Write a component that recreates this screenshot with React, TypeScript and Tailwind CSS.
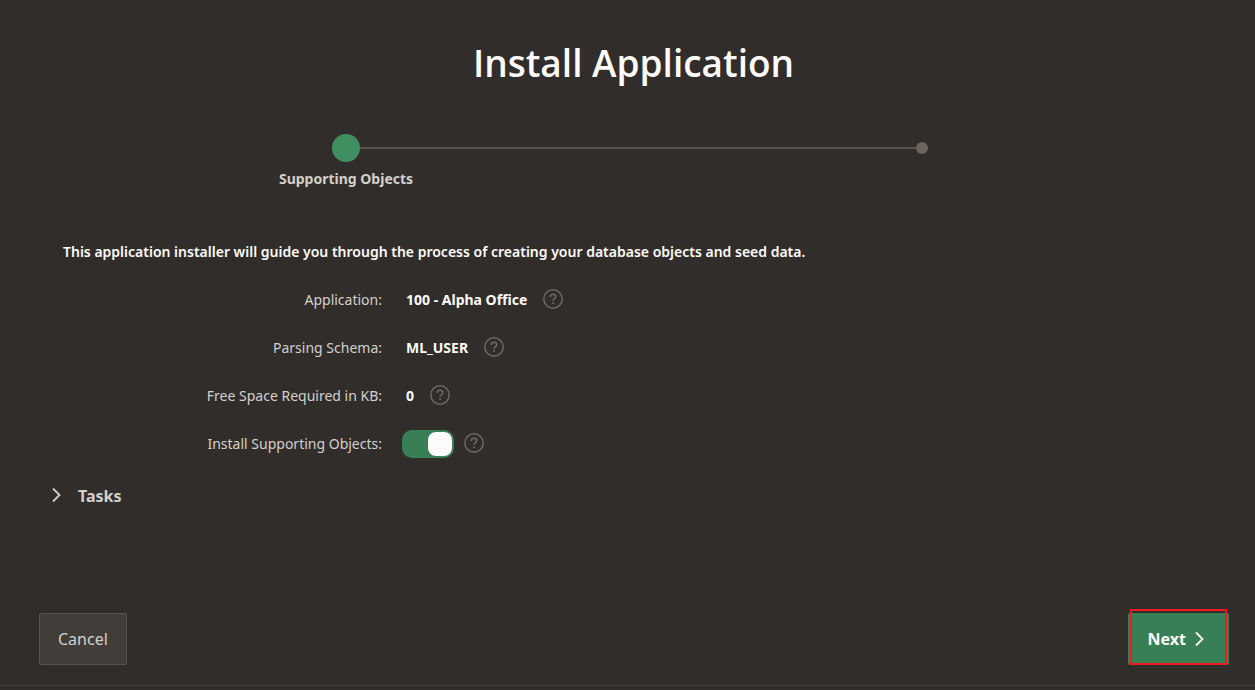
import { useState, type ReactNode } from "react";

function HelpButton({ label }: { label: string }) {
  return (
    <button type="button" aria-label={`Help: ${label}`} className="mb-0.5 block h-5 w-5 shrink-0 text-[#6f6963]">
      <svg viewBox="0 0 20 20" className="h-5 w-5" fill="none" stroke="currentColor">
        <circle cx="10" cy="10" r="9.2" strokeWidth="1.5" />
        <path d="M7.3 7.9c0-1.6 1.2-2.6 2.7-2.6s2.7 1 2.7 2.4c0 1.9-2.6 1.9-2.6 4.1" strokeWidth="1.5" />
        <path d="M10.1 13.2v1.7" strokeWidth="1.7" />
      </svg>
    </button>
  );
}

function Field({ label, htmlFor, children }: { label: string; htmlFor: string; children: ReactNode }) {
  return (
    <div className="flex h-12 items-center">
      <label htmlFor={htmlFor} className="w-[382px] shrink-0 text-right text-sm text-[#d3d0cc]">
        {label}
      </label>
      {children}
    </div>
  );
}

function ValueField({ id, label, value }: { id: string; label: string; value: string }) {
  return (
    <Field label={`${label}:`} htmlFor={id}>
      <output id={id} className="ml-6 mr-4 text-sm font-bold text-[#fcfbfa]">
        {value}
      </output>
      <HelpButton label={label} />
    </Field>
  );
}

export default function App() {
  const [install, setInstall] = useState(true);
  return (
    <div className="flex min-h-screen flex-col bg-[#312d2a] font-['Noto_Sans','Open_Sans',sans-serif] text-[#fcfbfa]">
      <main className="flex-1">
        <h1 className="pl-3 pt-[39px] text-center font-['Open_Sans','Noto_Sans',sans-serif] text-[37px] leading-[48px] font-semibold">
          Install Application
        </h1>

        <ol className="mt-[47px] grid grid-cols-2 pl-[58px] pr-[45px]">
          <li aria-current="step">
            <div className="flex h-7 items-center">
              <span className="flex-1" />
              <span className="h-7 w-7 rounded-full bg-[#3f8f61]" />
              <span className="h-0.5 flex-1 bg-[#57524c]" />
            </div>
            <p className="mt-[7px] text-center text-sm font-bold text-[#d3d0cc]">Supporting Objects</p>
          </li>
          <li>
            <div className="flex h-7 items-center">
              <span className="h-0.5 flex-1 bg-[#57524c]" />
              <span className="h-3 w-3 rounded-full bg-[#6b645e]" />
              <span className="flex-1" />
            </div>
          </li>
        </ol>

        <p className="mt-[53px] px-[63px] text-sm font-semibold">
          This application installer will guide you through the process of creating your database objects and seed data.
        </p>

        <div className="mt-3.5">
          <ValueField id="application" label="Application" value="100 - Alpha Office" />
          <ValueField id="schema" label="Parsing Schema" value="ML_USER" />
          <ValueField id="space" label="Free Space Required in KB" value="0" />
          <Field label="Install Supporting Objects:" htmlFor="install">
            <input
              id="install"
              type="checkbox"
              role="switch"
              checked={install}
              onChange={(e) => setInstall(e.target.checked)}
              className="ml-5 mr-2.5 flex h-7 w-[52px] appearance-none items-center rounded-[10px] bg-[#57524c] p-0.5 before:h-6 before:w-6 before:rounded-lg before:bg-[#fcfbfa] checked:justify-end checked:bg-[#387f55]"
            />
            <HelpButton label="Install Supporting Objects" />
          </Field>
        </div>

        <button type="button" aria-expanded="false" className="mt-4 ml-[51px] flex items-center gap-4 text-base font-bold text-[#d3d0cc]">
          <svg viewBox="0 0 11 16" className="mb-0.5 h-4 w-[11px]" fill="none" stroke="currentColor" strokeWidth="1.8">
            <path d="M2 1.5 8.5 8 2 14.5" />
          </svg>
          Tasks
        </button>
      </main>

      <footer className="mb-1 flex items-end justify-between border-b border-[#474340] pr-[26px] pb-5 pl-[39px]">
        <button type="button" className="h-[52px] rounded-xs border border-[#57534d] bg-[#413d38] px-[18px] text-base text-[#d3d0cc]">
          Cancel
        </button>
        <div className="relative">
          <button type="button" className="flex h-[52px] items-center gap-2 rounded-xs bg-[#387f55] pl-5 pr-6 text-base font-bold">
            Next
            <svg viewBox="0 0 11 16" className="h-4 w-[11px]" fill="none" stroke="currentColor" strokeWidth="1.8">
              <path d="M2 1.5 8.5 8 2 14.5" />
            </svg>
          </button>
          <span className="pointer-events-none absolute -top-1 right-0.5 bottom-0 left-0.5 border-2 border-[#ed1c24]" />
        </div>
      </footer>
    </div>
  );
}
